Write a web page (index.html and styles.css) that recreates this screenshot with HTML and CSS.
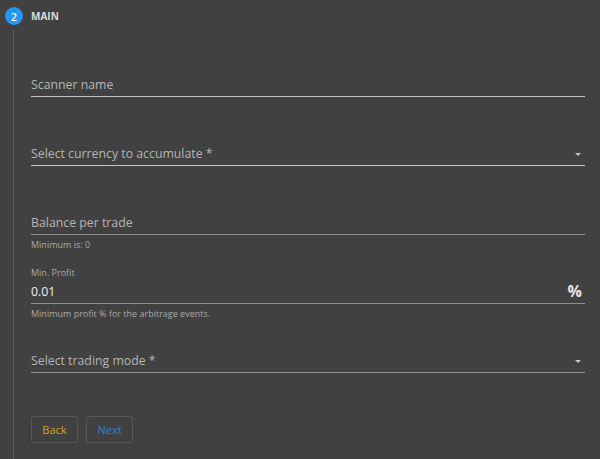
FILE: index.html
```html
<!DOCTYPE html>
<html>
<head>
<meta charset="utf-8">
<link rel="stylesheet" href="styles.css">
</head>
<body>
<div class="step">
  <div class="step-head">
    <span class="step-num">2</span>
    <span class="step-title">MAIN</span>
  </div>
  <div class="step-body">
    <div class="field f1"><span class="ph">Scanner name</span></div>
    <div class="field f2"><span class="ph">Select currency to accumulate *</span><span class="arrow"></span></div>
    <div class="field f3 dim"><span class="ph">Balance per trade</span></div>
    <div class="helper h1">Minimum is: 0</div>
    <div class="small-label">Min. Profit</div>
    <div class="field f4 dim"><span class="val">0.01</span><span class="pct">%</span></div>
    <div class="helper h2">Minimum profit % for the arbitrage events.</div>
    <div class="field f5 dim"><span class="ph">Select trading mode *</span><span class="arrow"></span></div>
    <div class="actions">
      <button class="btn back">Back</button>
      <button class="btn next">Next</button>
    </div>
  </div>
</div>
</body>
</html>
```
FILE: styles.css
```css
html, body {
  margin: 0;
  padding: 0;
  background: #414141;
  height: 100%;
  overflow: hidden;
}
body {
  font-family: "Open Sans", "Liberation Sans", sans-serif;
  color: #b3b3b3;
}
.step-head {
  display: flex;
  align-items: center;
  height: 18px;
  padding-top: 7px;
  padding-left: 5px;
}
.step-num {
  width: 18px;
  height: 18px;
  border-radius: 50%;
  background: #2196f3;
  color: #fff;
  font-size: 11px;
  font-weight: 600;
  display: flex;
  align-items: center;
  justify-content: center;
}
.step-title {
  margin-left: 8px;
  font-size: 10px;
  font-weight: 700;
  color: #dcdcdc;
}
.step-body {
  display: flow-root;
  margin-left: 13px;
  margin-top: 5px;
  border-left: 1px solid #5c5c5c;
  padding-left: 17px;
  padding-right: 15px;
  height: 440px;
}
.field {
  display: flex;
  align-items: center;
  height: 20px;
  padding-bottom: 2px;
  border-bottom: 1px solid #c4c4c4;
  font-size: 12.3px;
}
.field.dim { border-bottom-color: #8f8f8f; }
.f1 { margin-top: 44px; }
.f2 { margin-top: 46px; }
.f3 { margin-top: 46px; }
.f4 { margin-top: 2px; }
.f5 { margin-top: 30px; }
.ph { flex: 1; color: #b5b5b5; }
.val { flex: 1; color: #f0f0f0; }
.pct { color: #e6e6e6; font-size: 16px; font-weight: 700; margin-right: 3px; }
.arrow {
  width: 0;
  height: 0;
  border-left: 3px solid transparent;
  border-right: 3px solid transparent;
  border-top: 3px solid #c8c8c8;
  margin-right: 4px;
  margin-top: 2px;
}
.helper {
  font-size: 9px;
  line-height: 12px;
  color: #a8a8a8;
}
.h1 { margin-top: 4px; }
.h2 { margin-top: 4px; }
.small-label {
  margin-top: 16px;
  font-size: 9px;
  line-height: 12px;
  color: #a8a8a8;
}
.actions {
  display: flex;
  gap: 8px;
  margin-top: 43px;
}
.btn {
  background: transparent;
  border: 1px solid #585858;
  border-radius: 3px;
  height: 27px;
  width: 47px;
  font-family: "Open Sans", "Liberation Sans", sans-serif;
  font-size: 11px;
  padding: 0;
}
.back { color: #d0a81c; }
.next { color: #3784c8; }
```
